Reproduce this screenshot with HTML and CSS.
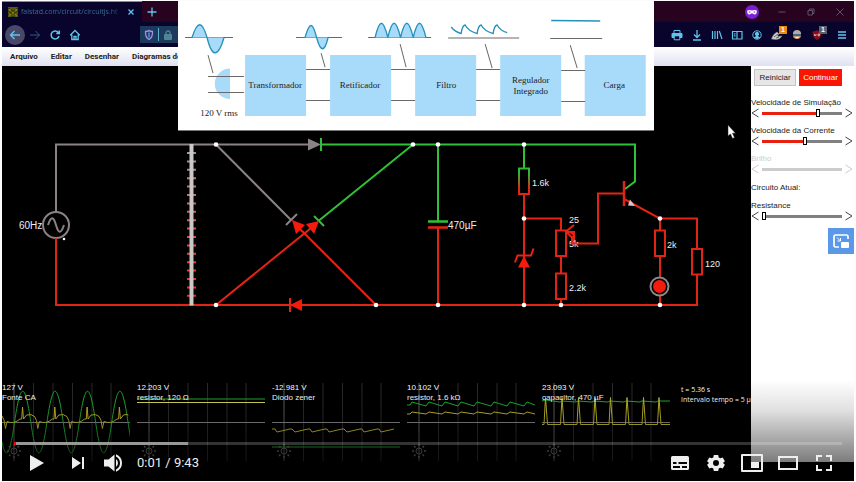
FILE: index.html
```html
<!DOCTYPE html>
<html lang="pt-BR">
<head>
<meta charset="utf-8">
<title>Fonte regulada - simulação</title>
<link rel="stylesheet" href="styles.css">
</head>
<body>
<main class="player">
  <div class="browser">
    <div class="tabbar">
      <div class="tab">
        <svg class="favicon" viewBox="0 0 10 10" aria-hidden="true"><path fill="#5c5a10" d="M0 0h10v10H0z"/><path d="M0 1l5 3 5-3M0 4l5 3 5-3M0 7l5 3 5-3" fill="none" stroke="#1d3a08"/><path d="M1 3h2M7 3h2M4 6h2M1 8h2M7 8h2" stroke="#d08a18"/></svg>
        <span class="tab-title">falstad.com/circuit/circuitjs.ht</span>
        <button class="icon-btn" aria-label="Fechar aba"><svg viewBox="0 0 12 12"><path d="M3.5 3.500l5 5m0-5l-5 5" stroke-width="1.300"/></svg></button>
      </div>
      <button class="icon-btn new-tab" aria-label="Nova aba"><svg viewBox="0 0 12 12"><path d="M6 1.500v9M1.500 6h9" stroke-width="1.300"/></svg></button>
      <div class="window-controls">
        <svg class="mask" viewBox="0 0 14 14" aria-hidden="true"><circle cx="7" cy="7" r="7" fill="#7a1fd6"/><path fill="#fff" d="M2.200 5.500C4 4.600 5.500 4.900 7 5.500c1.500-.6 3-.9 4.800 0 .2 2.500-.6 4-2.300 4C8.300 9.500 7.800 8.300 7 8.300s-1.300 1.200-2.500 1.200c-1.700 0-2.500-1.500-2.300-4z"/><path d="M3.800 7h1.700M8.500 7h1.700" stroke="#7a1fd6" stroke-width="1.200"/></svg>
        <button class="icon-btn dim" aria-label="Minimizar"><svg viewBox="0 0 12 12"><path d="M2.500 6h7"/></svg></button>
        <button class="icon-btn dim" aria-label="Restaurar"><svg viewBox="0 0 12 12"><path d="M3 4.500h4.500V9H3zM4.500 4.500V3H9v4.500H7.500"/></svg></button>
        <button class="icon-btn dim" aria-label="Fechar"><svg viewBox="0 0 12 12"><path d="M2.500 2.500l7 7m0-7l-7 7"/></svg></button>
      </div>
    </div>
    <div class="toolbar">
      <button class="nav-btn current" aria-label="Voltar"><svg viewBox="0 0 12 12"><path d="M11 6H1.500M5.500 2l-4 4 4 4" stroke-width="1.400"/></svg></button>
      <button class="nav-btn faded" aria-label="Avançar"><svg viewBox="0 0 12 12"><path d="M1 6h9.500M6.500 2l4 4-4 4"/></svg></button>
      <button class="nav-btn" aria-label="Recarregar"><svg viewBox="0 0 12 12"><path d="M9.500 3.800A4 4 0 1 0 10 7M10.300 1.500v3H7.300" stroke-width="1.500"/></svg></button>
      <button class="nav-btn" aria-label="Início"><svg viewBox="0 0 12 12"><path d="M1.200 6.300L6 1.500l4.800 4.800M2.800 5.500v5h6.400v-5M5 10.500V7.500h2v3" stroke-width="1.300"/></svg></button>
      <div class="address">
        <svg viewBox="0 0 12 12" aria-hidden="true"><path d="M2.500 2.500Q5 2.500 6 1.500q1 1 3.500 1Q9.800 8.500 6 10.500 2.200 8.500 2.500 2.500z" stroke="#a98cf0" stroke-width="1.300"/><path d="M6 3.500v5" stroke="#668ce0" stroke-width="1.500"/></svg>
        <i class="address-rule"></i>
        <svg viewBox="0 0 12 12" aria-hidden="true"><path d="M2.500 5.500h7v5h-7z" fill="#4f8497" stroke="#4f8497"/><path d="M4 5.500V4a2 2 0 0 1 4 0v1.500" stroke="#4f8497" stroke-width="1.300"/></svg>
      </div>
      <div class="tools">
        <button class="icon-btn" aria-label="Imprimir"><svg viewBox="0 0 12 12"><path d="M3 4V1.500h6V4" /><path fill="#5fc4ea" d="M1 4.500h10v4H9v-2H3v2H1z"/><path d="M3.200 6.800h5.600v4H3.200z"/></svg></button>
        <button class="icon-btn" aria-label="Downloads"><svg viewBox="0 0 12 12"><path d="M6 1v7M3 5.500l3 3 3-3M2 11h8" stroke-width="1.300"/></svg></button>
        <button class="icon-btn" aria-label="Biblioteca"><svg viewBox="0 0 12 12"><path d="M1.500 2v8M4 2v8M6.500 2v8M8.300 2l2.700 8" stroke-width="1.200"/></svg></button>
        <button class="icon-btn" aria-label="Barra lateral"><svg viewBox="0 0 12 12"><path d="M1.500 2.500h9.500v7.500H1.500zM6 2.500V10M3 4.800h1.500M3 6.800h1.500" stroke-width="1.200"/></svg></button>
        <button class="icon-btn" aria-label="Conta"><svg viewBox="0 0 12 12"><circle cx="6" cy="6" r="4.200"/><circle cx="6" cy="5" r="1.700" fill="#5fc4ea"/><path fill="#5fc4ea" d="M3.500 8.500q2.500-2.500 5 0Q6 10.500 3.500 8.500z"/></svg></button>
        <button class="icon-btn badged" aria-label="Extensão"><svg viewBox="0 0 12 12"><path d="M.5 10Q2 5 6 3l2 2Q6 6 7 7.500L11 7Q9 10.500 5 10.500z" fill="#d0d0d0" stroke="#888" stroke-width=".6"/><path d="M3 8l4-3M5 9l3-1" stroke="#333" stroke-width=".7"/></svg><b class="badge orange">1</b></button>
        <button class="icon-btn" aria-label="Perfil"><svg viewBox="0 0 12 12"><circle cx="6" cy="6" r="4" fill="#c9986c" stroke="none"/><path d="M2 5a4 4 0 0 1 8 0z" fill="#b3aaa2" stroke="none"/><path d="M2 6h8" stroke="#2f5e9c" stroke-width="1.800"/><path d="M4.500 8.500h3" stroke="#fff"/></svg></button>
        <button class="icon-btn badged" aria-label="Bloqueador"><svg viewBox="0 0 12 12"><path d="M6 1.500l4.500 1.200Q10.500 9 6 11 1.500 9 1.500 2.700z" fill="#8c0d1a" stroke="none"/><path d="M3.500 5v1.500h1.500V5M7 5h1.500v1.700H7z" stroke="#e8c8cc" stroke-width=".8"/></svg><b class="badge gray">1</b></button>
      </div>
      <button class="icon-btn menu-btn" aria-label="Menu"><svg viewBox="0 0 12 12"><path d="M2 3h8M2 6h8M2 9h8" stroke-width="1.300"/></svg></button>
    </div>
    <nav class="menubar">
      <button>Arquivo</button><button>Editar</button><button>Desenhar</button><button>Diagramas de medição</button>
    </nav>
    <div class="workspace">
      <section class="canvas">
        <svg class="circuit" viewBox="2 66 749 312" role="img" aria-label="Circuito">
          <defs>
            <linearGradient id="drop" gradientUnits="userSpaceOnUse" x1="0" y1="168" x2="0" y2="194"><stop offset=".2" stop-color="#2fb836"/><stop offset=".8" stop-color="#e32414"/></linearGradient>
            <linearGradient id="coil" gradientUnits="userSpaceOnUse" x1="0" y1="145" x2="0" y2="305"><stop offset="0" stop-color="#a09a9a"/><stop offset=".6" stop-color="#e84a40"/><stop offset="1" stop-color="#ff2010"/></linearGradient>
          </defs>
          <g fill="none" stroke-width="2">
            <g stroke="#8b8383">
              <path d="M56 212v-67.500h254M216 144.500l75 75.500M286 225l11-11"/>
              <circle cx="56" cy="225" r="13"/>
              <path d="M48 225c3-9 5.500-9 8 0s5 9 8 0"/>
            </g>
            <g stroke="#2fc137">
              <path d="M321 138v13M321 144.500h314v37l-10 7.500M413 144.500l-94 76M314 216l10 10M438 144.500v77M524 144.500v24"/>
              <path d="M428 221.500h20" stroke-width="2.500"/>
            </g>
            <path stroke="url(#coil)" stroke-width="9" stroke-dasharray="2 6.400" d="M191.500 152v146.500"/>
            <g stroke="#e32414">
              <path d="M56 238v67h641v-30.500M697 249v-30.500h-37M376 305l-80-80M216 305l100-81M290 298v14M438 228v77M524 194v111M524 218.500h37v12M561 256v17.500M561 299v6M624 193.500h-26v50h-24v-11.500h-7M574 225l-8 6.500 6 6M624 199l36 19.500v12M660 256v21M660 296v9"/>
              <path d="M428 227.500h20M624 181v25" stroke-width="2.500"/>
              <path d="M515 262.500l2.500-7h13.500l2.500-7M556 230.500h10V256h-10zM556 273.500h10V299h-10zM655 230.500h10V256h-10zM692 249h10v25.500h-10z"/>
            </g>
            <path stroke="url(#drop)" d="M519 168.500h10V194h-10z"/>
            <path stroke="#c9c7c7" stroke-width="4" d="M191.500 144v161.500"/>
            <circle cx="659.500" cy="286.500" r="9" stroke="#8f8b8b"/>
          </g>
          <path fill="#8b8383" d="M308 138.500l13 6-13 6z"/>
          <path fill="#f41a0c" d="M292 220l13 5-9 9zM319 221l-13 3 8 10zM290 305l12-6v12zM524 256l6 11.500h-12zM567 231l7 1v4z"/>
          <circle cx="659.500" cy="286.500" r="6.500" fill="#f41a0c"/>
          <path fill="#ccc" d="M630 199.500l5 6.500-7-.5z"/>
          <g fill="#fff">
            <circle cx="216" cy="144.500" r="2.300"/><circle cx="413" cy="144.500" r="2.300"/><circle cx="438" cy="144.500" r="2.300"/><circle cx="524" cy="144.500" r="2.300"/><circle cx="524" cy="218.500" r="2.300"/><circle cx="660" cy="218.500" r="2.300"/><circle cx="216" cy="305" r="2.300"/><circle cx="376" cy="305" r="2.300"/><circle cx="438" cy="305" r="2.300"/><circle cx="524" cy="305" r="2.300"/><circle cx="561" cy="305" r="2.300"/><circle cx="660" cy="305" r="2.300"/><circle cx="64" cy="239" r="1.300"/>
            <path stroke="#222" stroke-width=".5" d="M728 125v11l2.500-2 2 4.500 2-1-2-4.300h3z"/>
          </g>
          <g class="value large"><text x="19" y="229">60Hz</text><text x="448" y="229">470µF</text></g>
          <g class="value"><text x="532" y="186">1.6k</text><text x="569" y="223">25</text><text x="569" y="247">5k</text><text x="569" y="291">2.2k</text><text x="667" y="248">2k</text><text x="705" y="267">120</text></g>
          <path d="M572 236v7.500h5" fill="none" stroke="#e32414" stroke-width="2"/>
        </svg>
        <div class="scopes">
          <figure class="scope">
            <svg viewBox="0 0 128 78" aria-hidden="true">
              <defs>
                <g id="grid" fill="none"><path stroke="#2b2b2b" d="M31.500 0v78M51 0v78M70.500 0v78M90 0v78M109 0v78"/><path stroke="#606060" d="M12 0v78"/><path stroke="#858585" d="M0 39.500h128"/></g>
                <g id="cog" fill="none" stroke="#686868"><circle cx="12" cy="68" r="3"/><path stroke-width="1.500" d="M12 63v-2M12 75v-2M7 68H5M19 68h-2M8.500 64.500L7 63M17 73l-1.500-1.500M8.500 71.500L7 73M17 63l-1.500 1.500"/></g>
              </defs>
              <use href="#grid"/>
              <path class="trace volt" d="M-3.600 39c5.900 41 10.300 41 16.200 0s10.300-41 16.200 0s10.300 41 16.200 0s10.300-41 16.200 0s10.300 41 16.200 0s10.300-41 16.200 0s10.300 41 16.200 0s10.300-41 16.200 0s10.300 41 16.200 0"/>
              <path class="trace amp" d="M0 33l2 4 1.500 8.500l1.500-7q7 3 13-2.500l1.700 0 .8-12 1 12 3-4q5-1.500 8 1.500l2 4 1.300 8l1.500-7q7 3 13-2.500l1.700 0 .8-12 1 12 3-4q5-1.500 8 1.500l2 4 1.300 8l1.500-7q7 3 13-2.500l1.700 0 .8-12 1 12 3-4q5-1.500 8 1.500l2 4 1.300 8l1.500-7q7 3 13-2.500l1.700 0 .8-12 1 12 3-4q3-1 5 0"/>
              <use href="#cog"/>
            </svg>
            <figcaption>127 V<br>Fonte CA</figcaption>
          </figure>
          <figure class="scope">
            <svg viewBox="0 0 128 78" aria-hidden="true"><use href="#grid"/><path class="trace volt" d="M0 16h128"/><path class="trace amp bright" d="M0 19.500h128"/><use href="#cog"/></svg>
            <figcaption>12.203 V<br>resistor, 120 Ω</figcaption>
          </figure>
          <figure class="scope">
            <svg viewBox="0 0 128 78" aria-hidden="true"><use href="#grid"/><path class="trace volt" d="M0 64h128"/><path class="trace amp" d="M0 46h3l2 3 13-3h2l3 3 13-3h2l2 3 13-3h2l2 3 13-3h2l3 3 13-3h2l2 3 13-3h2l2 3 13-3"/><use href="#cog"/></svg>
            <figcaption>-12.981 V<br>Diodo zener</figcaption>
          </figure>
          <figure class="scope">
            <svg viewBox="0 0 128 78" aria-hidden="true"><use href="#grid"/><path class="trace volt" d="M0 22h3l2-3 14 4 3-4 13 4 3-4 13 4 3-4 13 4 3-4 14 4 3-4 13 4 3-4 14 4 3-4 8 3"/><path class="trace amp" d="M0 31h3l2-2 14 2 3-2 13 2 3-2 13 2 3-2 13 2 3-2 14 2 3-2 13 2 3-2 14 2 3-2 8 2"/><use href="#cog"/></svg>
            <figcaption>10.102 V<br>resistor, 1.6 kΩ</figcaption>
          </figure>
          <figure class="scope">
            <svg viewBox="0 0 128 78" aria-hidden="true"><use href="#grid"/><path class="trace volt" d="M0 18l4-1 14 2 2-1 14 1 2-1 14 1 2-1 14 1 2-1 14 1 2-1 14 1 2-1 14 1 2-1h12"/><path class="trace amp" d="M0 41.500h2l1.500-27 2 27h13l1.500-27 2 27h13l1.500-27 2 27h13l1.500-27 2 27h12l1.500-27 2 27h13l1.500-27 2 27h13l1.500-27 2 27h12l1.500-27 2 27h9"/><use href="#cog"/></svg>
            <figcaption>23.093 V<br>capacitor, 470 µF</figcaption>
          </figure>
          <p class="timing">t = 5.36 s<br>Intervalo tempo = 5 µ</p>
        </div>
      </section>
      <aside class="sidebar">
        <div class="actions"><button class="reset">Reiniciar</button><button class="run">Continuar</button></div>
        <div class="control">
          <label for="sim">Velocidade de Simulação</label>
          <div class="slide"><button aria-label="Diminuir simulação"><svg viewBox="0 0 8 10"><path d="M7.500 1L1 5l6.500 4"/></svg></button><input id="sim" type="range" value="71" style="--v:71%"><button aria-label="Aumentar simulação"><svg viewBox="0 0 8 10"><path d="M.5 1L7 5 .5 9"/></svg></button></div>
        </div>
        <div class="control">
          <label for="cur">Velocidade da Corrente</label>
          <div class="slide"><button aria-label="Diminuir corrente"><svg viewBox="0 0 8 10"><path d="M7.500 1L1 5l6.500 4"/></svg></button><input id="cur" type="range" value="54" style="--v:54%"><button aria-label="Aumentar corrente"><svg viewBox="0 0 8 10"><path d="M.5 1L7 5 .5 9"/></svg></button></div>
        </div>
        <div class="control off">
          <label for="bri">Brilho</label>
          <div class="slide"><button disabled aria-label="Diminuir brilho"><svg viewBox="0 0 8 10"><path d="M7.500 1L1 5l6.500 4"/></svg></button><input id="bri" type="range" value="0" disabled style="--v:0%"><button disabled aria-label="Aumentar brilho"><svg viewBox="0 0 8 10"><path d="M.5 1L7 5 .5 9"/></svg></button></div>
        </div>
        <p class="current-circuit">Circuito Atual:</p>
        <div class="control">
          <label for="res">Resistance</label>
          <div class="slide"><button aria-label="Diminuir resistência"><svg viewBox="0 0 8 10"><path d="M7.500 1L1 5l6.500 4"/></svg></button><input id="res" type="range" value="0" style="--v:0%"><button aria-label="Aumentar resistência"><svg viewBox="0 0 8 10"><path d="M.5 1L7 5 .5 9"/></svg></button></div>
        </div>
      </aside>
    </div>
  </div>

  <svg class="blocks" viewBox="178 1 476 130" role="img" aria-label="Diagrama de blocos">
    <path fill="#fff" d="M178 1h476v129H178z"/>
    <path stroke="#777" d="M178 130.500h476"/>
    <path fill="#a8dbfa" d="M245 55h61v61h-61zM330 55h61v61h-61zM415 55h61v61h-61zM500 55h61v61h-61zM584.500 55h61v61h-61zM230 68.500a15 15 0 0 0 0 30.500z"/>
    <path stroke="#6d6868" fill="none" d="M185 37.500h48M296 37.500h46M368 37.500h63M448 38h71M550 38.500h52M208 76.500h36M208 92.500h36M306 69.500h24M306 100.500h24M391 69.500h24M391 100.500h24M476 69.500h24M476 100.500h24M561 70.500h24M561 101.500h24M208 55l5 18M321 53l4 14M400 44l6 23M485 44l7 24M570 45l7 23"/>
    <g fill="#a8dbfa" stroke="#2591bb" stroke-width="1.300">
      <path d="M192 37.500c5.500-17 10-17 15 0c5 20.500 11 20.500 17 0"/>
      <path d="M305 37.500c4.500-16 7.500-16 11.500 0c4 15 8 15 11.500 0"/>
      <path d="M375 37.500c4.500-19 8-19 12.700 0c4.500-19 8-19 12.700 0c4.500-19 8-19 12.700 0c4.500-19 8-19 12.700 0"/>
    </g>
    <path fill="none" stroke="#2591bb" stroke-width="1.300" d="M451 27q4 5 10 6.500 1-8 4-8.500 3 6 12 8.500 1-8 4-8.500 3 6 12 8.500 1-8 4-8.500 3 6 10 7.500M551 20.500l49 .5"/>
    <g class="block-label"><text x="275" y="88">Transformador</text><text x="360" y="88">Retificador</text><text x="446" y="88">Filtro</text><text x="530.500" y="83">Regulador</text><text x="530.500" y="94">Integrado</text><text x="614" y="88">Carga</text><text x="219" y="116">120 V rms</text></g>
  </svg>

  <button class="pip" aria-label="Destacar vídeo"><svg viewBox="0 0 26 26"><path d="M20 11V8.500Q20 7 18.500 7h-11Q6 7 6 8.500v9Q6 19 7.500 19H11" fill="none" stroke="#fff" stroke-width="1.700"/><path d="M9 9.500l3 3M12.500 10v3h-3" stroke="#fff" fill="none"/><rect x="13" y="14" width="8" height="6" rx="1" fill="#fff"/></svg></button>

  <div class="chrome">
    <input class="seek" type="range" value="0" aria-label="Progresso">
    <div class="buttons">
      <button class="play" aria-label="Reproduzir"><svg viewBox="0 0 24 24"><path d="M5 4v16l14-8z"/></svg></button>
      <button aria-label="Próximo"><svg viewBox="0 0 24 24"><path d="M6 6v12l9-6zM16 6h2v12h-2z"/></svg></button>
      <button aria-label="Volume"><svg viewBox="0 0 24 24"><path d="M2 8.500v7h4.500l6 5v-17l-6 5zM14 8v8q2-1.500 2-4t-2-4zM14 3.300v2.200q4 2 4 6.500t-4 6.500v2.200q6-2.500 6-8.700t-6-8.700z"/></svg></button>
      <span class="time">0:01 / 9:43</span>
      <button class="push" aria-label="Legendas"><svg viewBox="0 0 24 24"><path fill-rule="evenodd" d="M4.500 5h15Q21 5 21 6.500v11q0 1.500-1.500 1.500h-15Q3 19 3 17.500v-11Q3 5 4.500 5zM5 11v2h3.500v-2zM14 15v2h5v-2zM5 15v2h7v-2zM10.500 11v2H19v-2z"/></svg></button>
      <button aria-label="Configurações"><svg viewBox="0 0 24 24"><path fill-rule="evenodd" d="M9.800 4h4.400l.5 2.400 1.600.9 2.400-.8 2.200 3.800L19 11.900v.2l1.900 1.600-2.200 3.800-2.400-.8-1.600.9-.5 2.400H9.800l-.5-2.400-1.600-.9-2.400.8-2.200-3.800L5 12.100v-.2l-1.900-1.600 2.200-3.800 2.400.8 1.600-.9zM12 9a3 3 0 1 0 0 6 3 3 0 0 0 0-6z"/></svg></button>
      <button aria-label="Miniplayer"><svg viewBox="0 0 24 24"><path d="M2 4h20v16H2z" fill="none" stroke="#eee" stroke-width="2" stroke-linejoin="round"/><path d="M11 11h8v6h-8z"/></svg></button>
      <button aria-label="Modo teatro"><svg viewBox="0 0 24 24"><path d="M3 6h18v12H3z" fill="none" stroke="#eee" stroke-width="2"/></svg></button>
      <button aria-label="Tela cheia"><svg viewBox="0 0 24 24"><path d="M5 10V5h5M14 5h5v5M19 14v5h-5M10 19H5v-5" fill="none" stroke="#eee" stroke-width="2"/></svg></button>
    </div>
  </div>
</main>
</body>
</html>
```
FILE: styles.css
```css
* { box-sizing: border-box; }
body { margin: 0; background: #fcfcfc; font-family: "Liberation Sans", Arial, sans-serif; font-size: 8px; line-height: 10px; }
button { border: 0; padding: 0; margin: 0; background: none; color: inherit; font: inherit; }
svg { display: block; }
p, figure { margin: 0; }

.player { position: relative; margin: 1px 2px; padding-bottom: 19px; background: #000; overflow: hidden; }

/* Browser window */
.icon-btn { position: relative; flex: none; width: 12px; height: 12px; }
.icon-btn svg, .nav-btn svg, .address svg { width: 12px; height: 12px; fill: none; stroke: #5fc4ea; }
.tabbar { display: flex; align-items: center; height: 21px; padding-right: 8px; background: #28031f; }
.tab { display: flex; align-items: center; gap: 3px; width: 140px; height: 21px; padding: 0 5px 0 6px; background: #08042c; border-top: 1px solid #2fa9dc; color: #3c6e96; }
.favicon { width: 10px; height: 10px; flex: none; }
.tab-title { flex: 1; white-space: nowrap; font-family: "Open Sans", sans-serif; font-size: 7px; mask-image: linear-gradient(90deg, #000 85%, rgba(0, 0, 0, .3)); }
.new-tab { margin-left: 4px; }
.window-controls { display: flex; align-items: center; gap: 17px; margin-left: auto; }
.mask { width: 14px; height: 14px; }
.icon-btn.dim svg { stroke: #60506c; }

.toolbar { display: flex; align-items: center; height: 25px; padding: 0 6px 0 3px; background: #08042c; }
.nav-btn { display: grid; place-items: center; width: 20px; height: 20px; border-radius: 50%; }
.nav-btn.current { background: #4a4868; }
.nav-btn.faded { opacity: .45; }
.address { display: flex; align-items: center; gap: 3px; flex: 1; height: 17px; margin: 0 17px 0 55px; padding-left: 3px; background: #1c3a5c; }
.address-rule { width: 1px; height: 13px; background: #5fb0d0; }
.tools { display: flex; gap: 8px; }
.badge { position: absolute; top: -3px; right: -4px; width: 8px; height: 8px; font-size: 7px; line-height: 8px; text-align: center; color: #fff; }
.badge.orange { background: #e98a17; }
.badge.gray { background: #5c5f66; }
.menu-btn { margin-left: 13px; }

.menubar { display: flex; gap: 13px; height: 19px; padding-left: 8px; background: linear-gradient(#fff, #dfe1f1); color: #222; font-family: Roboto, sans-serif; font-weight: 700; white-space: nowrap; }

/* Simulator */
.workspace { display: flex; min-height: 396px; }
.canvas { flex: 1; min-width: 0; background: #000; }
.circuit { width: 100%; height: auto; }
.value { fill: #eee; font-size: 9px; }
.value.large { font-size: 10px; }
.scopes { display: grid; grid-template-columns: repeat(5, minmax(0, 128fr)) minmax(0, 74fr); gap: 7px; padding-top: 5px; color: #fff; }
.scope { display: grid; }
.scope > * { grid-area: 1 / 1; }
.scope svg { width: 100%; height: auto; }
.trace { fill: none; stroke-width: 1; }
.trace.volt { stroke: #1fb02e; }
.trace.amp { stroke: #c2b82a; }
.trace.bright { stroke: #dcd660; }
.timing { padding: 2px 0 0 4px; font-family: "Open Sans", sans-serif; font-size: 7px; white-space: nowrap; }

.sidebar { flex: none; width: 103px; padding-top: 3px; background: #fff; color: #222; }
.actions { display: flex; gap: 3px; padding: 0 12px 0 3px; margin-bottom: 12px; }
.actions button { height: 17px; }
.reset { flex: 41; background: #e6e6e6; border: 1px solid #c4c4c4; }
.run { flex: 44; background: #fb1505; color: #fff; }
.control { margin-bottom: 8px; }
.control label { display: block; height: 10px; white-space: nowrap; }
.slide { display: flex; align-items: center; gap: 3px; height: 10px; padding-right: 1px; }
.slide button { flex: none; width: 8px; height: 10px; }
.slide button svg { width: 8px; height: 10px; fill: none; stroke: #444; }
.slide input { appearance: none; flex: 1; min-width: 0; height: 10px; margin: 0; background: linear-gradient(90deg, #e8200f var(--v), #808080 var(--v)) center / 100% 3px no-repeat; }
.slide input::-webkit-slider-thumb { appearance: none; width: 4px; height: 8px; background: #fff; border: 1px solid #000; outline: 1px solid #000; outline-offset: -1px; }
.off { color: #ccc; }
.off .slide svg { stroke: #ccc; }
.off input { background: linear-gradient(#ccc, #ccc) center / 100% 3px no-repeat; }
.off input::-webkit-slider-thumb { visibility: hidden; }
.current-circuit { margin: 9px 0 8px; }

/* Layers over the video */
.blocks { position: absolute; top: 0; left: 20.6%; width: 55.9%; }
.block-label { font-family: "Liberation Serif", serif; font-size: 9px; fill: #222; text-anchor: middle; }
.pip { position: absolute; top: 227px; right: 0; width: 26px; height: 26px; background: #5b98e8; }

.chrome { position: absolute; left: 0; right: 0; bottom: 0; padding: 62px 12px 0; background: linear-gradient(transparent, rgba(0, 0, 0, .12) 30%, rgba(0, 0, 0, .58) 90%); }
.seek { appearance: none; display: block; width: 100%; height: 3px; margin: 0; background: linear-gradient(90deg, #f00 2px, rgba(160, 160, 160, .95) 2px 21%, rgba(255, 255, 255, .2) 21%); }
.seek::-webkit-slider-thumb { appearance: none; width: 1px; height: 3px; background: #f00; }
.buttons { display: flex; align-items: center; height: 36px; color: #eee; }
.buttons button { display: grid; place-items: center; width: 36px; height: 36px; }
.buttons .play { width: 46px; }
.buttons svg { width: 24px; height: 24px; fill: #eee; }
.time { margin-left: 5px; font-family: Roboto, sans-serif; font-size: 13px; white-space: nowrap; }
.buttons .push { margin-left: auto; }
```
